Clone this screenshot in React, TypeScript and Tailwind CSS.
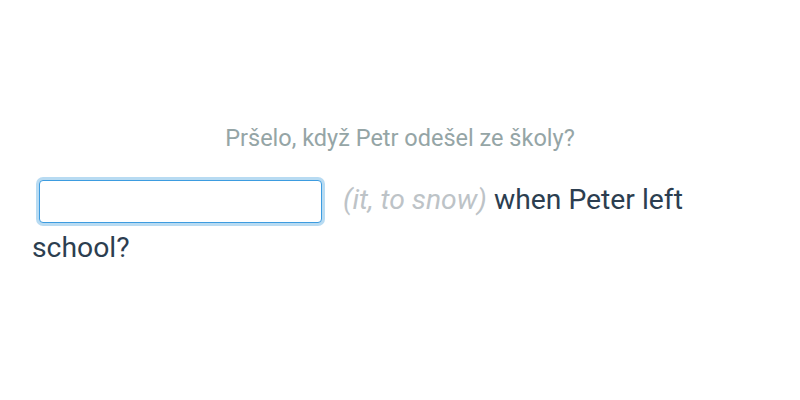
export default function App() {
  return (
    <div
      className="h-[400px] w-[800px] bg-white px-[32px] pt-[121px]"
      style={{ fontFamily: "Roboto, 'Liberation Sans', sans-serif" }}
    >
      <p className="text-center text-[23.5px] leading-[35px] text-[#95a5a6]">
        Pršelo, když Petr odešel ze školy?
      </p>
      <div className="mt-[20px] text-[28.3px] leading-[48px] text-[#2c3e50]">
        <input
          type="text"
          aria-label="answer"
          className="ml-[7px] mr-[14px] h-[43px] w-[283px] rounded-[4px] border border-[#3d9ce0] bg-white px-3 align-middle shadow-[0_0_0_3px_rgba(52,152,219,0.35)] outline-none"
        />{" "}
        <span className="italic text-[#bdc3c7]">(it, to snow)</span> when Peter left school?
      </div>
    </div>
  );
}
